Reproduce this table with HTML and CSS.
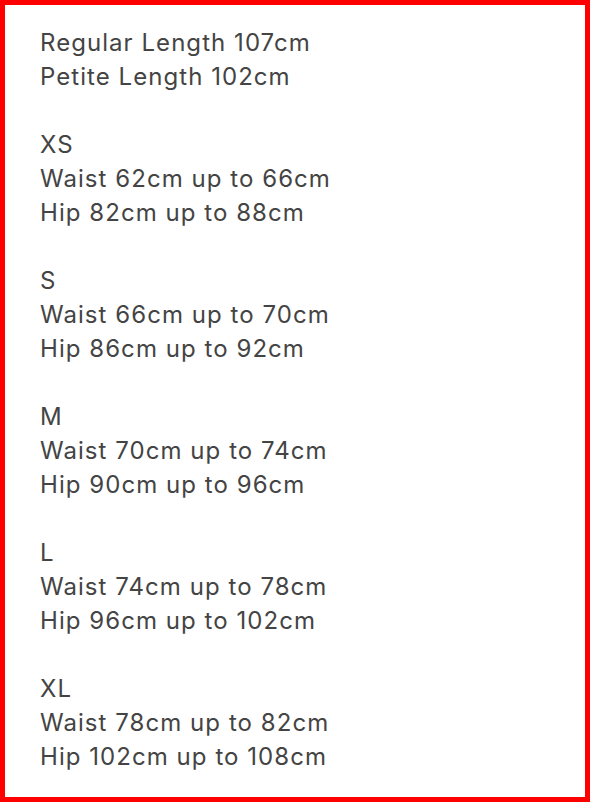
FILE: index.html
```html
<!DOCTYPE html>
<html>
<head>
<meta charset="utf-8">
<link rel="stylesheet" href="styles.css">
</head>
<body>
<div class="frame">
  <div class="group">
    <div class="line">Regular Length 107cm</div>
    <div class="line">Petite Length 102cm</div>
  </div>
  <div class="group">
    <div class="line">XS</div>
    <div class="line">Waist 62cm up to 66cm</div>
    <div class="line">Hip 82cm up to 88cm</div>
  </div>
  <div class="group">
    <div class="line">S</div>
    <div class="line">Waist 66cm up to 70cm</div>
    <div class="line">Hip 86cm up to 92cm</div>
  </div>
  <div class="group">
    <div class="line">M</div>
    <div class="line">Waist 70cm up to 74cm</div>
    <div class="line">Hip 90cm up to 96cm</div>
  </div>
  <div class="group">
    <div class="line">L</div>
    <div class="line">Waist 74cm up to 78cm</div>
    <div class="line">Hip 96cm up to 102cm</div>
  </div>
  <div class="group">
    <div class="line">XL</div>
    <div class="line">Waist 78cm up to 82cm</div>
    <div class="line">Hip 102cm up to 108cm</div>
  </div>
</div>
</body>
</html>
```

FILE: styles.css
```css
html, body {
  margin: 0;
  padding: 0;
  background: #ffffff;
}
.frame {
  box-sizing: border-box;
  width: 590px;
  height: 802px;
  border: 5px solid #ff0000;
  padding: 21px 0 0 35px;
  display: flex;
  flex-direction: column;
  gap: 34px;
  font-family: Inter, "Noto Sans", sans-serif;
  font-size: 24px;
  letter-spacing: 1.05px;
  line-height: 34px;
  color: #444444;
}
```
